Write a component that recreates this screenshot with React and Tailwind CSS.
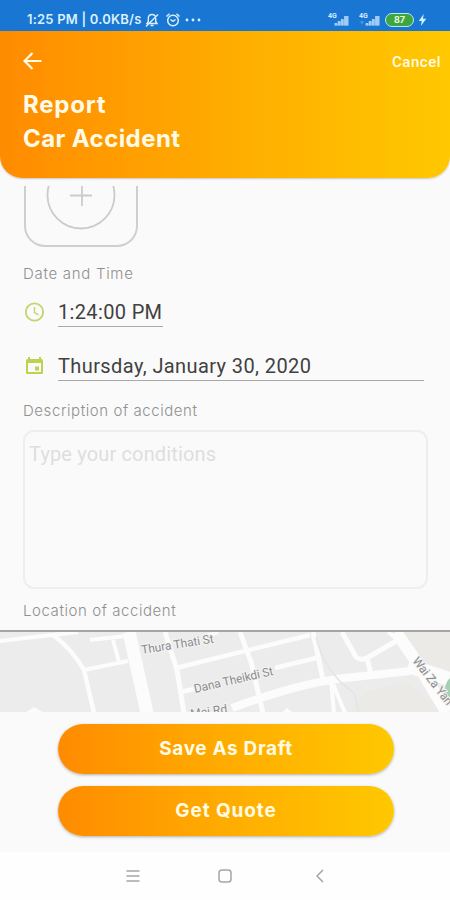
import { useState } from "react";

const ACCENT = "bg-gradient-to-r from-[#ff8b00] via-[#ffac00] to-[#ffc800]";

function Signal({ dim }) {
  return (
    <svg width="22" height="16" viewBox="0 0 22 16" className="shrink-0">
      <text x="0" y="6" fontSize="7" fontWeight="700" fontFamily="Roboto, sans-serif" fill="#d5ebff">4G</text>
      {dim && <path d="M1 9h4l-2 4z" fill="#4c96dd" />}
      <path d="M6.500 13.500 20.500 4v9.500z" fill="#6fb0ee" />
      <path d="M6.500 13.500v-2.500h2.500v2.500zM9.700 13.500v-4.500h2.500v4.500zM12.900 13.500v-6.500h2.500v6.500zM16.100 13.500v-9.500h4.200v9.500z" fill="#9fcbf5" />
    </svg>
  );
}

function StatusBar() {
  return (
    <div className="h-[31px] bg-[#1976d2] text-[#d9f0ff] flex items-center pl-[27px] pr-[23px] pt-[8px] font-[Inter,sans-serif]">
      <span className="text-[13px] leading-none font-semibold whitespace-nowrap w-[115px] tracking-[0.200px]">1:25 PM | 0.0KB/s</span>

      {/* muted bell, alarm, more */}
      <svg width="16" height="16" viewBox="0 0 16 16" fill="none" stroke="currentColor" strokeWidth="1.400" className="ml-[2px]">
        <path d="M3 11.500h10l-1.300-2V6.500C11.700 4 10 2.500 8 2.500S4.300 4 4.300 6.500v3zM6.500 13.500h3M2 14.500 14 2.500" />
      </svg>
      <svg width="16" height="16" viewBox="0 0 16 16" fill="none" stroke="currentColor" strokeWidth="1.500" className="ml-[5px]">
        <circle cx="8" cy="8.500" r="5.300" />
        <path d="M5.500 7.500 8 9.300l2.500-1.800M1.500 4.500l3-2.700M14.500 4.500l-3-2.700" />
      </svg>
      <svg width="18" height="4" viewBox="0 0 18 4" fill="currentColor" className="ml-[3px]">
        <circle cx="3" cy="2" r="1.400" />
        <circle cx="9" cy="2" r="1.400" />
        <circle cx="15" cy="2" r="1.400" />
      </svg>

      <div className="ml-auto flex items-center">
        <Signal />
        <div className="w-[9px]" />
        <Signal dim />
        <div className="ml-[4px] w-[29px] h-[14px] rounded-full border-[1.500px] border-[#bde5f5] bg-[#3ea63f] flex items-center justify-center text-[9px] leading-none font-bold text-[#e5ffdf]">87</div>
        <svg width="9" height="14" viewBox="0 0 9 14" className="ml-[4px]">
          <path d="M5.700 1 .8 8h3L2.800 13 8.300 5.800H5z" fill="#cff3ff" />
        </svg>
      </div>
    </div>
  );
}

function Header() {
  return (
    <header className={`h-[147px] rounded-b-[22px] shadow-[0_1px_2px_rgba(0,0,0,0.2)] text-[#fffbe8] pl-[23px] pr-[9px] pt-[20px] ${ACCENT}`}>
      <div className="flex items-center justify-between h-[20px]">
        <svg width="20" height="18" viewBox="0 0 20 18" fill="none" stroke="currentColor" strokeWidth="2.200">
          <path d="M18.500 9H1.500M9.500 1 1.500 9l8 8" />
        </svg>
        <button className="text-[15px] font-medium font-[Roboto,sans-serif] tracking-[0.500px] pt-[2px]">Cancel</button>
      </div>
      <h1 className="mt-[17px] text-[24px] leading-[34px] font-bold font-[Inter,sans-serif]">
        <span className="block tracking-[0.800px]">Report</span>
        <span className="block tracking-[0.420px]">Car Accident</span>
      </h1>
    </header>
  );
}

function Label({ children, className }) {
  return (
    <div className={`text-[15px] leading-[20px] text-[#909090] font-[Inter,sans-serif] font-light whitespace-nowrap ${className}`}>
      {children}
    </div>
  );
}

function MapPreview() {
  return (
    <svg width="450" height="81" viewBox="0 0 450 81" className="block bg-[#ececec]">
      <path d="M350 81 365 60 405 50 450 81zM398 0 420 28 450 40V0z" fill="#ebeae7" />
      <g fill="none" stroke="#fcfcfc">
        <path d="M0 9 52 3 78 0" strokeWidth="4" />
        <path d="M53 3Q72 17 84 38L94 81" strokeWidth="4.500" />
        <path d="M84 38 128 29M90 8l36-4M113 8l6 22" strokeWidth="4" />
        <path d="M129 0 147 81" strokeWidth="13" />
        <path d="M165 0 177 38 184 81" strokeWidth="5" />
        <path d="M218 0 205 5M176 36 310 3" strokeWidth="4.500" />
        <path d="M181 60l13-3M275 36l41-10" strokeWidth="4.500" />
        <path d="M240 0 251 30 263 81" strokeWidth="5" />
        <path d="M313 0 323 48" strokeWidth="5" />
        <path d="M232 76Q300 51 345 46L410 39" strokeWidth="8" />
        <path d="M331 48 334 81M333 52 345 81" strokeWidth="4" />
        <path d="M342 0 356 25Q360 29 367 26L398 8M367 26 371 42" strokeWidth="5" />
        <path d="M388 0 401 10" strokeWidth="4" />
        <path d="M396 0 414 26 447 81" strokeWidth="12" />
        <path d="M408 34 450 47" strokeWidth="14" />
      </g>
      <path d="M450 46q-7 6-4 17l4 3z" fill="#a5d1b2" />
      <path d="M25 81 34 75l10 6zM282 81l5-5 6 5z" fill="#fcfcfc" />
      <path d="M316 5Q324 40 354 61l5 20" stroke="#e5e5e5" strokeWidth="1.500" fill="none" />
      <g fontFamily="Roboto, sans-serif" fontSize="12" fill="#8b8b8b" stroke="#f3f3f3" strokeWidth="2" paintOrder="stroke">
        <text transform="translate(142 22) rotate(-9)" textLength="73">Thura Thati St</text>
        <text transform="translate(195 61) rotate(-13)" textLength="81">Dana Theikdi St</text>
        <text transform="translate(191 86) rotate(-8)" textLength="37">Mei Rd</text>
        <text transform="translate(412 29) rotate(52)" textLength="76">Wai Za Yan Tar</text>
      </g>
    </svg>
  );
}

function GradientButton({ children, className }) {
  return (
    <button className={`w-[336px] h-[50px] pt-[1px] rounded-full shadow-[0_1px_3px_rgba(0,0,0,0.3)] text-[#fffbe4] text-[19px] font-bold font-[Inter,sans-serif] ${ACCENT} ${className}`}>
      {children}
    </button>
  );
}

export default function App() {
  const [description, setDescription] = useState("");

  return (
    <div className="w-[450px] h-[900px] flex flex-col overflow-hidden bg-[#fafafa]">
      <StatusBar />
      <Header />

      {/* scrolled form content */}
      <main className="mt-[8px] h-[526px] overflow-hidden flex flex-col">
        <div className="px-[23px] flex flex-col">
          <div className="ml-[1px] w-[114px] h-[61px] rounded-b-[21px] border-2 border-t-0 border-[#cfcfcf] overflow-hidden">
            <svg width="110" height="59" viewBox="0 0 110 59" fill="none" stroke="#cbcbcb" strokeWidth="1.800">
              <circle cx="55" cy="9" r="33.500" />
              <path d="M44 9.500h22M56 0v20" />
            </svg>
          </div>

          <Label className="mt-[17px] tracking-[0.700px]">Date and Time</Label>

          <div className="mt-[14px] flex items-start h-[29px]">
            <svg width="22" height="22" viewBox="0 0 22 22" fill="none" stroke="#c3d46a" strokeWidth="1.800" className="mt-[3px] mr-[13px]">
              <circle cx="11.500" cy="11" r="8.700" />
              <path d="M11.500 6v5.500l4 2.300" strokeWidth="1.400" />
            </svg>
            <span className="h-[29px] border-b-[1.500px] border-[#a8a8a8] text-[20px] leading-[28px] text-[#414141] font-[Roboto,sans-serif] w-[105px] whitespace-nowrap tracking-[0.350px]">1:24:00 PM</span>
          </div>

          <div className="mt-[25px] flex items-start h-[29px]">
            <svg width="22" height="22" viewBox="0 0 22 22" className="mt-[3px] mr-[13px]">
              <path d="M5 2h2v2h9V2h2v2h.500q1.500 0 1.500 1.500v12q0 1.500-1.500 1.500h-14q-1.500 0-1.500-1.500v-12Q3 4 4.500 4H5zM5 8v9h13V8zM12 11.500h4v4h-4z" fill="#bdd34f" fillRule="evenodd" />
            </svg>
            <span className="h-[29px] border-b-[1.500px] border-[#a8a8a8] text-[20px] leading-[28px] text-[#414141] font-[Roboto,sans-serif] w-[366px] whitespace-nowrap tracking-[0.400px]">Thursday, January 30, 2020</span>
          </div>

          <Label className="mt-[20px] tracking-[0.570px]">Description of accident</Label>

          <textarea
            value={description}
            onChange={(e) => setDescription(e.target.value)}
            placeholder="Type your conditions"
            className="mt-[9px] w-[405px] h-[159px] rounded-[11px] border-2 border-[#eeeeee] resize-none outline-none px-[4px] pt-[8px] text-[20px] leading-[28px] tracking-[0.150px] placeholder:text-[#dedede] font-[Roboto,sans-serif]"
          />

          <Label className="mt-[12px] tracking-[0.570px]">Location of accident</Label>
        </div>

        <div className="mt-[9px] border-t-2 border-[#a5a5a5]">
          <MapPreview />
        </div>
      </main>

      <footer className="h-[140px] flex flex-col items-center pl-[2px] pt-[12px] gap-[12px]">
        <GradientButton className="tracking-[0.650px]">Save As Draft</GradientButton>
        <GradientButton className="tracking-[0.900px]">Get Quote</GradientButton>
      </footer>

      {/* android navigation */}
      <nav className="h-[48px] bg-[#fefefe] flex items-center pl-[126px] text-[#a5a5a5]">
        <svg width="14" height="14" viewBox="0 0 14 14" stroke="currentColor" strokeWidth="1.500">
          <path d="M.5 2h13M.5 7h13M.5 12h13" />
        </svg>
        <svg width="14" height="14" viewBox="0 0 14 14" fill="none" stroke="currentColor" strokeWidth="1.500" className="ml-[78px]">
          <rect x="1" y="1" width="12" height="12" rx="3" />
        </svg>
        <svg width="10" height="14" viewBox="0 0 10 14" fill="none" stroke="currentColor" strokeWidth="1.500" className="ml-[83px]">
          <path d="M8 1 2 7l6 6" />
        </svg>
      </nav>
    </div>
  );
}
